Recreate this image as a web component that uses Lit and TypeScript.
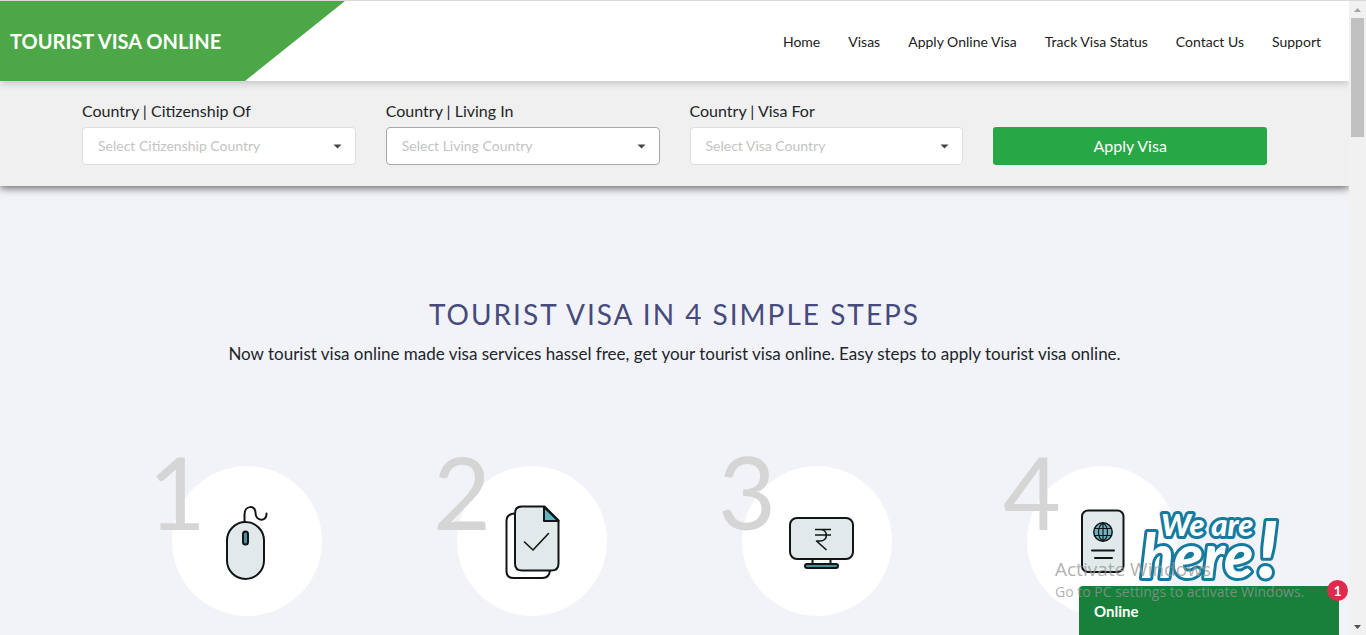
import { LitElement, html, css, svg } from "lit";
import { customElement } from "lit/decorators.js";

const NAV = ["Home", "Visas", "Apply Online Visa", "Track Visa Status", "Contact Us", "Support"];

const FIELDS = [
  { id: "citizenship", label: "Country | Citizenship Of", hint: "Select Citizenship Country", active: false },
  { id: "living", label: "Country | Living In", hint: "Select Living Country", active: true },
  { id: "visa", label: "Country | Visa For", hint: "Select Visa Country", active: false },
];

const mouse = svg`
  <rect x="55" y="56" width="37" height="57" rx="18.5" fill="#e1e9ea"/>
  <rect x="71" y="65.500" width="5" height="13" rx="2.500" fill="#4a8d9c"/>
  <path fill="none" d="M72.500 56V48.500C72.500 39 83.500 39 83.500 46.500C83.500 56 95 56 94.500 47.500"/>`;

const documents = svg`
  <path fill="#fff" d="M57 47.500C52 48 49.500 50 49.500 55V105Q49.500 112 56.500 112H85.500Q92.500 112 93 104"/>
  <path fill="#e1e9ea" d="M64.500 40.500H87.500L101.500 54.500V97.500Q101.500 104.500 94.500 104.500H65Q58 104.500 58 97.500V47.500Q58 40.500 64.500 40.500Z"/>
  <path fill="#5fb5c8" d="M87 41V55H101.500Z"/>
  <path fill="none" stroke-width="1.600" d="M67.500 76L76 84L91.500 67.500"/>`;

const monitor = svg`
  <path fill="#fff" d="M70.500 92V98M88.500 92V98"/>
  <rect x="48" y="52" width="63" height="41" rx="7" fill="#e1e9ea"/>
  <rect x="63" y="98" width="33" height="4" rx="2" fill="#4a8d9c"/>
  <path fill="none" stroke-width="1.600" stroke-linecap="butt" d="M73 63.500H89M73 69H89M74 63.500H78C86.500 63.500 86.500 75 78 75H74.500L84.500 84"/>`;

const passport = svg`
  <rect x="55" y="44.500" width="41.500" height="61.500" rx="6" fill="#e1e9ea"/>
  <circle cx="76" cy="66" r="9.200" fill="#6fb3c2" stroke-width="1.500"/>
  <path fill="none" stroke-width="1.200" d="M76 57V75M68 62.500H84M68 69.500H84M76 57C70 61 70 71 76 75M76 57C82 61 82 71 76 75"/>
  <path fill="none" d="M65 84.500H87M68 92H85"/>`;

const STEPS = [mouse, documents, monitor, passport];

@customElement("app-root")
export class AppRoot extends LitElement {
  static styles = css`
    :host {
      display: flex;
      height: 100vh;
      overflow: hidden;
      font-family: Lato, sans-serif;
      color: #212529;
      background: #f2f3f8;
    }
    * { box-sizing: border-box; }
    .page {
      position: relative;
      flex: 1;
      min-width: 0;
      overflow: hidden;
      border-top: 1px solid #d9d9d9;
    }
    .header {
      position: relative;
      z-index: 2;
      display: flex;
      justify-content: space-between;
      align-items: center;
      height: 80px;
      padding-right: 28px;
      background: #fff;
      box-shadow: 0 2px 8px rgba(0, 0, 0, 0.2);
    }
    .brand {
      display: flex;
      align-items: center;
      align-self: stretch;
      width: 345px;
      padding-left: 10px;
      background: #4ca746;
      clip-path: polygon(0 0, 100% 0, 245px 100%, 0 100%);
      color: #fff;
      font-size: 20px;
      font-weight: 700;
      text-decoration: none;
    }
    .nav { display: flex; gap: 28px; padding-top: 2px; }
    .nav a {
      color: #212121;
      font-size: 14px;
      line-height: 20px;
      text-decoration: none;
    }
    .search {
      position: relative;
      z-index: 1;
      display: grid;
      grid-template-columns: repeat(4, 1fr);
      align-items: end;
      gap: 30px;
      padding: 18px 82px 21px;
      background: #f0f0f0;
      box-shadow: 0 2px 8px rgba(0, 0, 0, 0.6);
    }
    .field { display: grid; gap: 4px; }
    .field label { font-size: 16px; line-height: 24px; }
    .control { display: grid; align-items: center; }
    .control select, .control svg { grid-area: 1 / 1; }
    .control select {
      appearance: none;
      width: 100%;
      height: 38px;
      padding: 0 15px;
      border: 1px solid #dedede;
      border-radius: 4px;
      background: #fff;
      color: #c4c4c4;
      font: 14px/20px Lato, sans-serif;
    }
    .control .active { border-color: #a8a8a8; }
    .control svg { justify-self: end; margin-right: 14px; pointer-events: none; }
    .apply {
      height: 38px;
      border: 0;
      border-radius: 3px;
      background: #28a745;
      color: #fff;
      font: 16px/24px Lato, sans-serif;
    }
    .steps { padding-top: 110px; text-align: center; }
    .steps h1 {
      margin: 0;
      color: #464a7d;
      font-size: 28px;
      font-weight: 400;
      line-height: 36px;
      letter-spacing: 2px;
    }
    .steps p { margin: 9px 0 0; font-size: 17px; line-height: 26px; }
    .list {
      display: grid;
      grid-template-columns: repeat(4, 1fr);
      justify-items: center;
      max-width: 1140px;
      margin: 99px auto 0;
      padding: 0;
      list-style: none;
    }
    .step {
      position: relative;
      width: 150px;
      height: 150px;
      border-radius: 50%;
      background: #fff;
    }
    .step svg { display: block; stroke: #121516; stroke-width: 2; stroke-linecap: round; stroke-linejoin: round; }
    .number {
      position: absolute;
      left: -24px;
      top: -35px;
      color: #d5d5d5;
      font-size: 100px;
      line-height: 120px;
    }
    .chat { position: absolute; right: 10px; bottom: 0; z-index: 3; width: 260px; }
    .chat-open {
      display: block;
      width: 100%;
      height: 49px;
      padding: 0 15px;
      border: 0;
      border-radius: 4px 0 0 0;
      background: #18803b;
      color: #fff;
      font: 700 15px/20px Lato, sans-serif;
      text-align: left;
    }
    .greeting { display: block; margin-left: 55px; overflow: visible; }
    .greeting text {
      font-family: Lato, sans-serif;
      font-weight: 900;
      font-style: italic;
      fill: #fff;
      stroke: #147b9f;
      stroke-width: 6;
      stroke-linejoin: round;
      paint-order: stroke;
    }
    .count {
      position: absolute;
      right: -9px;
      bottom: 34px;
      width: 21px;
      height: 21px;
      border-radius: 50%;
      background: #df2a4c;
      color: #fff;
      font-size: 14px;
      font-weight: 700;
      line-height: 21px;
      text-align: center;
    }
    .notice {
      position: absolute;
      right: 39px;
      bottom: 33px;
      z-index: 4;
      width: 255px;
      color: rgba(150, 150, 150, 0.75);
      font-family: "Open Sans", sans-serif;
      font-size: 14px;
      line-height: 20px;
      white-space: nowrap;
      pointer-events: none;
    }
    .notice strong { display: block; font-size: 19px; font-weight: 400; line-height: 26px; }
    .scroll {
      display: flex;
      flex-direction: column;
      align-items: center;
      width: 17px;
      background: #f1f1f1;
      border-top: 1px solid #d9d9d9;
    }
    .scroll svg { flex: none; }
    .thumb { width: 13px; height: 119px; background: #c1c1c1; }
    .track { flex: 1; }
  `;

  render() {
    return html`
      <main class="page">
        <header class="header">
          <a class="brand" href="#">TOURIST VISA ONLINE</a>
          <nav class="nav">${NAV.map((n) => html`<a href="#">${n}</a>`)}</nav>
        </header>
        <form class="search">
          ${FIELDS.map((f) => html`
            <div class="field">
              <label for=${f.id}>${f.label}</label>
              <div class="control">
                <select id=${f.id} class=${f.active ? "active" : ""}><option>${f.hint}</option></select>
                <svg width="9" height="5" viewBox="0 0 9 5"><path d="M0.500 0.500H8.500L4.500 4.500Z" fill="#444"/></svg>
              </div>
            </div>`)}
          <button class="apply" type="button">Apply Visa</button>
        </form>
        <section class="steps">
          <h1>TOURIST VISA IN 4 SIMPLE STEPS</h1>
          <p>Now tourist visa online made visa services hassel free, get your tourist visa online. Easy steps to apply tourist visa online.</p>
          <ol class="list">
            ${STEPS.map((icon, i) => html`
              <li class="step">
                <svg width="150" height="150" viewBox="0 0 150 150">${icon}</svg>
                <span class="number">${i + 1}</span>
              </li>`)}
          </ol>
        </section>
        <aside class="chat">
          <svg class="greeting" width="160" height="82" viewBox="0 0 160 82">
            <text x="7" y="74" font-size="60">here</text>
            <text x="123" y="74" font-size="78">!</text>
            <text x="27" y="32" font-size="31">We are</text>
          </svg>
          <button class="chat-open" type="button">Online</button>
          <span class="count">1</span>
        </aside>
        <div class="notice"><strong>Activate Windows</strong>Go to PC settings to activate Windows.</div>
      </main>
      <div class="scroll" aria-hidden="true">
        <svg width="17" height="17" viewBox="0 0 17 17"><path d="M5 11H12L8.500 7Z" fill="#a3a3a3"/></svg>
        <div class="thumb"></div>
        <div class="track"></div>
        <svg width="17" height="17" viewBox="0 0 17 17"><path d="M5 7H12L8.500 11Z" fill="#505050"/></svg>
      </div>
    `;
  }
}
